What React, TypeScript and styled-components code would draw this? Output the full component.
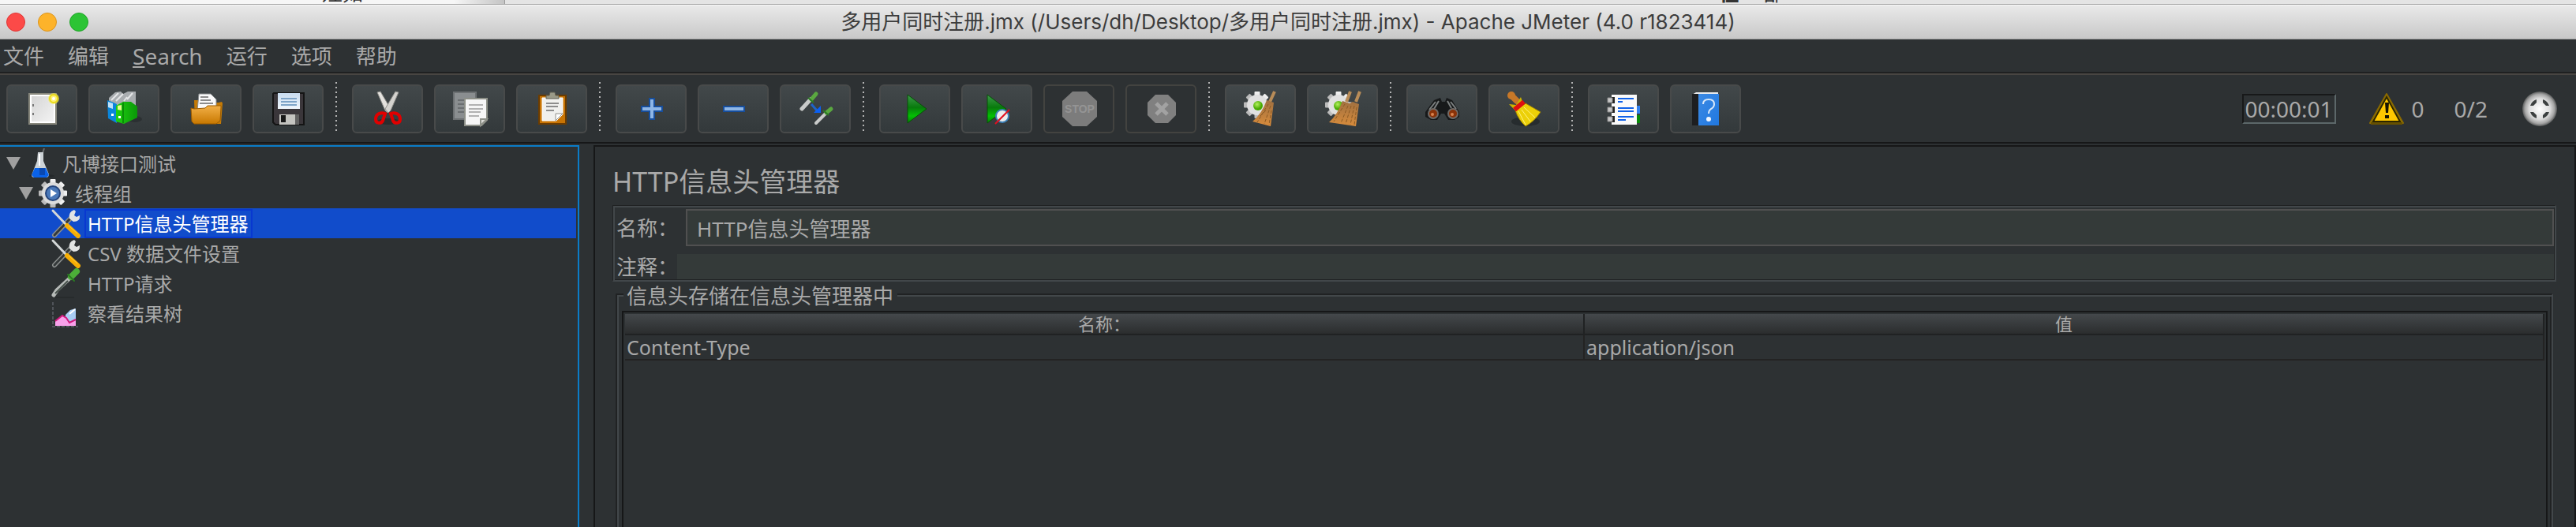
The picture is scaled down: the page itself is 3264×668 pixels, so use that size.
import React from "react";
import styled, { createGlobalStyle } from "styled-components";

const color = {
  panel: "#2d3133",
  text: "#a9a9a9",
  dark: "#161718",
  line: "#202223",
  bevel: "#42474a",
  field: "#343a39",
  fieldEdge: "#505050",
  focus: "#0a7cc8",
  select: "#114ccb",
  selectEdge: "#0838d0",
};

const GlobalStyle = createGlobalStyle`
  * { box-sizing: border-box; }
  body {
    margin: 0;
    background: ${color.panel};
    color: ${color.text};
    font-family: "Noto Sans", "Noto Sans CJK SC", sans-serif;
    font-size: 26px;
    font-weight: 400;
  }
  button, input { font: inherit; color: inherit; }
`;

const Window = styled.div`
  min-height: 100vh;
  display: flex;
  flex-direction: column;
`;

/* ---------- window behind, title bar ---------- */

const BackStrip = styled.div`
  height: 6px;
  display: flex;
  overflow: hidden;
  align-items: flex-end;
  background: #e4e4e4;
  border-bottom: 1px solid #a8a8a8;
  color: #333;
  line-height: 28px;
`;

const BackPane = styled.div`
  width: 640px;
  padding-left: 408px;
  flex: none;
  border-right: 1px solid #999;
  background: linear-gradient(90deg, #f6f6f6 90%, #c4c4c4);
`;

const BackTail = styled.div`
  flex: 1;
  display: flex;
  justify-content: flex-end;
  padding-right: 1004px;
  gap: 30px;
`;

const TitleBar = styled.header`
  height: 44px;
  padding: 0 8px;
  display: grid;
  grid-template-columns: 1fr auto 1fr;
  align-items: center;
  background: linear-gradient(#e9e9e9, #c8c8c8);
  border-top: 1px solid #f6f6f6;
  border-bottom: 1px solid #9d9d9d;
`;

const Lights = styled.div`
  display: flex;
  gap: 16px;
`;

const Light = styled.button<{ $fill: string; $edge: string }>`
  width: 24px;
  height: 24px;
  padding: 0;
  border-radius: 50%;
  border: 1px solid ${(p) => p.$edge};
  background: ${(p) => p.$fill};
`;

const Title = styled.h1`
  margin: 0;
  font: 400 26px/42px Inter, "Noto Sans CJK SC", sans-serif;
  color: #3c3c3c;
  white-space: nowrap;
`;

/* ---------- menu and tool bar ---------- */

const MenuBar = styled.nav`
  height: 45px;
  display: flex;
  gap: 30px;
  padding-left: 4px;
  border-bottom: 2px solid #484542;
  box-shadow: inset 0 -2px 0 #1f2021;
`;

const MenuItem = styled.button<{ $latin?: boolean }>`
  border: 0;
  padding: 0;
  background: none;
  font-size: ${(p) => (p.$latin ? 28 : 26)}px;
  line-height: 42px;
  height: 42px;
`;

const ToolBar = styled.div`
  height: 87px;
  padding: 0 24px 0 8px;
  display: flex;
  align-items: center;
  gap: 14px;
  border-bottom: 2px solid ${color.dark};
`;

const ToolButton = styled.button`
  width: 90px;
  height: 62px;
  flex: none;
  padding: 0;
  display: flex;
  align-items: center;
  justify-content: center;
  border: 2px solid #484a4a;
  border-radius: 6px;
  background: linear-gradient(#42484a, #33393b);
  &:disabled {
    background: none;
    border-color: #434340;
  }
`;

const ToolGap = styled.div`
  width: 8px;
  height: 62px;
  flex: none;
  margin-bottom: 6px;
  padding-left: 1px;
  &::before {
    content: "";
    display: block;
    width: 2px;
    height: 100%;
    background: repeating-linear-gradient(#b4b4b4 0 2px, transparent 2px 6px);
  }
`;

const Status = styled.div`
  margin-left: auto;
  display: flex;
  align-items: center;
  font-size: 28px;
  line-height: 34px;
`;

const Clock = styled.output`
  width: 119px;
  height: 38px;
  padding-left: 2px;
  border: 2px solid;
  border-color: #171819 #5c6769 #5c6769 #171819;
  white-space: nowrap;
  margin-right: 42px;
`;

const WarnButton = styled.button`
  display: flex;
  align-items: center;
  gap: 10px;
  padding: 0;
  border: 0;
  background: none;
  margin-right: 38px;
`;

const Threads = styled.span`
  margin-right: 44px;
`;

/* ---------- panes ---------- */

const Panes = styled.main`
  flex: 1;
  display: flex;
  gap: 18px;
  padding-top: 2px;
`;

const Tree = styled.ul`
  width: 734px;
  flex: none;
  margin: 0;
  padding: 2px 2px 0 0;
  list-style: none;
  border: solid ${color.focus};
  border-width: 2px 2px 0 0;
  font-size: 24px;
`;

const TreeRow = styled.li<{ $depth: number; $on?: boolean }>`
  height: 38px;
  display: flex;
  align-items: center;
  padding-left: ${(p) => 8 + p.$depth * 16}px;
  background: ${(p) => (p.$on ? color.select : "none")};
  color: ${(p) => (p.$on ? "#fff" : "inherit")};
`;

const Twist = styled.span<{ $open?: boolean }>`
  width: 18px;
  height: 16px;
  margin-right: 6px;
  background: ${(p) => (p.$open ? "#a0a0a0" : "none")};
  clip-path: polygon(0 0, 100% 0, 50% 100%);
`;

const TreeLabel = styled.span<{ $on?: boolean }>`
  margin-left: 5px;
  padding: 0 4px 0 2px;
  border: 2px solid ${(p) => (p.$on ? color.selectEdge : "transparent")};
  line-height: 33px;
`;

const Editor = styled.section`
  flex: 1;
  min-width: 0;
  display: flex;
  flex-direction: column;
  padding: 20px 23px 0 22px;
  border: solid ${color.dark};
  border-width: 2px 2px 0;
`;

const Heading = styled.h2`
  margin: 0 0 6px;
  font-size: 34px;
  font-weight: 400;
  line-height: 48px;
`;

const Fields = styled.div`
  display: flex;
  flex-direction: column;
  gap: 10px;
  padding: 4px 1px 1px 2px;
  border: solid;
  border-width: 1px 2px 2px 1px;
  border-color: ${color.line} ${color.bevel} ${color.bevel} ${color.line};
  box-shadow: inset 2px 2px 0 ${color.bevel}, inset -1px -1px 0 ${color.line};
`;

const FieldRow = styled.div`
  display: flex;
  align-items: center;
`;

const FieldLabel = styled.label<{ $width: number }>`
  width: ${(p) => p.$width}px;
  padding-left: 2px;
  flex: none;
  line-height: 32px;
  white-space: nowrap;
`;

const TextField = styled.input<{ $framed?: boolean }>`
  flex: 1;
  min-width: 0;
  height: ${(p) => (p.$framed ? 47 : 32)}px;
  padding: 0 12px;
  border: ${(p) => (p.$framed ? `2px solid ${color.fieldEdge}` : "0")};
  background: ${color.field};
  outline: 0;
`;

const Group = styled.fieldset`
  flex: 1;
  min-width: 0;
  margin: 0 4px;
  padding: 5px 5px 0 6px;
  border: 2px solid;
  border-color: ${color.line} ${color.bevel} ${color.line} ${color.line};
  border-bottom: 0;
  box-shadow: inset 2px 2px 0 ${color.bevel}, inset -2px 0 0 ${color.line};
  display: flex;
  flex-direction: column;
`;

const Legend = styled.legend`
  margin-left: 2px;
  padding: 4px 5px 0 4px;
  line-height: 28px;
  background: ${color.panel};
`;

const TableBox = styled.div`
  flex: 1;
  padding: 2px 2px 0;
  border: solid ${color.dark};
  border-width: 2px 2px 0;
`;

const Table = styled.table`
  width: 100%;
  table-layout: fixed;
  border-collapse: separate;
  border-spacing: 0;
`;

const HeadCell = styled.th`
  height: 27px;
  padding: 0;
  font-size: 22px;
  font-weight: 400;
  line-height: 25px;
  background: linear-gradient(#44484b, #2b2d2e);
  border-right: 2px solid ${color.line};
  border-bottom: 2px solid ${color.line};
`;

const Cell = styled.td`
  height: 32px;
  padding: 0 0 0 2px;
  font-size: 25px;
  line-height: 30px;
  border-right: 2px solid #232323;
  border-bottom: 2px solid #232323;
`;

/* ---------- icons ---------- */

const Icon = ({ size = 48, children }: { size?: number; children: React.ReactNode }) => (
  <svg width={size} height={size} viewBox={`0 0 ${size} ${size}`} aria-hidden="true">
    {children}
  </svg>
);

const Gradients = () => (
  <svg width="0" height="0" style={{ position: "absolute" }} aria-hidden="true">
    <defs>
      <linearGradient id="paper" x1="0" y1="0" x2="1" y2="1">
        <stop offset="0" stopColor="#d2d2d2" /><stop offset="1" stopColor="#f6f6f6" />
      </linearGradient>
      <linearGradient id="folder" x1="0" y1="0" x2="0" y2="1">
        <stop offset="0" stopColor="#f2b048" /><stop offset="1" stopColor="#c87800" />
      </linearGradient>
      <linearGradient id="play" x1="0" y1="0" x2="0" y2="1">
        <stop offset="0" stopColor="#3f9a4c" /><stop offset=".45" stopColor="#087a0c" /><stop offset=".75" stopColor="#04c004" /><stop offset="1" stopColor="#067a06" />
      </linearGradient>
      <linearGradient id="straw" x1="0" y1="0" x2="0" y2="1">
        <stop offset="0" stopColor="#a07040" /><stop offset="1" stopColor="#d88c3c" />
      </linearGradient>
      <linearGradient id="label" x1="0" y1="0" x2="0" y2="1">
        <stop offset="0" stopColor="#c8dcf0" /><stop offset="1" stopColor="#f0f6fc" />
      </linearGradient>
      <linearGradient id="green" x1="0" y1="0" x2="1" y2="0">
        <stop offset="0" stopColor="#1ed010" /><stop offset="1" stopColor="#0a9808" />
      </linearGradient>
      <linearGradient id="steel" x1="0" y1="0" x2="0" y2="1">
        <stop offset="0" stopColor="#f2f2f2" /><stop offset="1" stopColor="#b8b8b8" />
      </linearGradient>
      <linearGradient id="book" x1="0" y1="0" x2="1" y2="1">
        <stop offset="0" stopColor="#3c8ae4" /><stop offset="1" stopColor="#2078e0" />
      </linearGradient>
      <radialGradient id="orb">
        <stop offset="0" stopColor="#fff" /><stop offset=".6" stopColor="#dcdcdc" /><stop offset=".85" stopColor="#a4a4a4" /><stop offset="1" stopColor="#585a5a" />
      </radialGradient>
      <radialGradient id="lamp" cx=".4" cy=".35">
        <stop offset="0" stopColor="#b4f060" /><stop offset="1" stopColor="#46a800" />
      </radialGradient>
    </defs>
  </svg>
);

const NewIcon = () => (
  <Icon>
    <path d="M8 5h34v38H8z" fill="url(#paper)" stroke="#87877c" strokeWidth="2" />
    <path d="M10 7h30v34H10z" fill="none" stroke="#fff" strokeWidth="2" />
    <path d="M12 18h2v3h-2zM12 29h2v3h-2z" fill="#777" />
    <circle cx="39" cy="11" r="7" fill="#f6ee50" opacity=".6" />
    <circle cx="39" cy="11" r="5" fill="#fff07a" stroke="#eadb18" strokeWidth="2" />
    <circle cx="39" cy="11" r="2" fill="#fff" />
  </Icon>
);

const TemplatesIcon = () => (
  <Icon>
    <ellipse cx="38" cy="37" rx="9" ry="4" fill="#202425" opacity=".5" />
    <path d="M5 10 13 3l7-1 3 3 6-3h10v18L20 24 5 18z" fill="#a9adb0" />
    <path d="M8 13 17 4M14 14 23 5M28 12l7-8M24 14l4-5" stroke="#e4e6e7" strokeWidth="2" />
    <path d="M3 13l8 3 4 2v24L4 36z" fill="#0a86dc" />
    <path d="M4 15l6 2v7l-6-2z" fill="#bfe2fa" />
    <path d="M14 20l9-5h10l8 6v14l-17 8-10-3z" fill="url(#green)" />
    <path d="M23 16v26" stroke="#0a8c08" strokeWidth="2" />
    <path d="M16 20l5-1v7l-5-1z" fill="#e8fa90" />
    <path d="M17 33h3v3h-3zM8 30h3v3H8z" fill="#fff" />
  </Icon>
);

const OpenIcon = () => (
  <Icon>
    <path d="M9 13h10l2 3h19l4-1 1 2-2 26H10z" fill="#c47a06" />
    <path d="M15 5h15l7 7v14H13z" fill="#fafafa" stroke="#888c8e" />
    <path d="M17 9h10M17 13h13M16 17h17" stroke="#8c8c8c" strokeWidth="2" />
    <path d="M5 23l4 1 14-1 3-3h17v2l-1 17-5 4H9l-3-3z" fill="url(#folder)" stroke="#9c5c00" />
  </Icon>
);

const SaveIcon = () => (
  <Icon>
    <path d="M6 4h38v40H8l-3-3V5z" fill="#3a363a" stroke="#141414" strokeWidth="2" />
    <path d="M11 4h28v20H11z" fill="url(#label)" />
    <path d="M15 11h20M15 15h20M15 19h20" stroke="#7ea4c8" strokeWidth="2" />
    <path d="M13 31h20v13H13z" fill="#c4c4c0" />
    <path d="M33 31h5v13h-5z" fill="#626262" />
    <path d="M15 32h6v9h-6z" fill="#181818" />
  </Icon>
);

const CutIcon = () => (
  <Icon>
    <ellipse cx="25" cy="40" rx="14" ry="4" fill="#242829" opacity=".7" />
    <path d="M11 3l4-1 13 22-4 5-3-3z" fill="#e4e2de" stroke="#8d8d89" />
    <path d="M38 3l-4-1-13 22 4 5 3-3z" fill="#d4d2ce" stroke="#8d8d89" />
    <path d="M21 30c-5-2-12 0-12 7 0 6 7 6 9 2zM28 30c5-2 12 0 12 7 0 6-7 6-9 2z" fill="none" stroke="#e00000" strokeWidth="4" />
  </Icon>
);

const CopyIcon = () => (
  <Icon>
    <path d="M4 3h28v34H4z" fill="#8a8e90" stroke="#6c7072" strokeWidth="2" />
    <path d="M9 13h10M9 18h8M9 23h8M9 28h8" stroke="#6a6e70" strokeWidth="2" />
    <path d="M18 11h28v27l-7 7H18z" fill="#f6f6f6" stroke="#8d9088" strokeWidth="2" />
    <path d="M23 19h18M23 24h18M23 28h15M23 33h13" stroke="#b2b2b2" strokeWidth="2" />
    <path d="M38 45v-8h8z" fill="#dcdcd8" stroke="#8d9088" strokeWidth="2" />
  </Icon>
);

const PasteIcon = () => (
  <Icon>
    <path d="M8 7h34v36H8z" fill="#c87404" stroke="#6c3c00" strokeWidth="2" />
    <path d="M12 10h26v21l-8 8H12z" fill="#f0f0ee" stroke="#fff" />
    <path d="M17 17h16M17 21h15M17 26h10" stroke="#8c8c8c" strokeWidth="2" />
    <path d="M29 39v-9h9z" fill="#fff" stroke="#8e8e8a" />
    <path d="M17 7h4l1-4h6l1 4h4v4H17z" fill="#9a9a88" stroke="#5f5f52" />
  </Icon>
);

const PlusIcon = () => (
  <Icon>
    <path d="M22 11h6v10h10v6H28v10h-6V27H12v-6h10z" fill="#8eb6e6" stroke="#174e9c" strokeWidth="2" />
  </Icon>
);

const MinusIcon = () => (
  <Icon>
    <path d="M12 21h26v6H12z" fill="#8eb6e6" stroke="#174e9c" strokeWidth="2" />
  </Icon>
);

const ToggleIcon = () => (
  <Icon>
    <path d="M7 24 18 12" stroke="#c9cbca" strokeWidth="5" strokeLinecap="round" />
    <path d="M19 12 25 5" stroke="#5aa840" strokeWidth="5" strokeLinecap="round" />
    <path d="M15 10l7 6" stroke="#2c7a24" strokeWidth="2" />
    <path d="M25 42 37 30" stroke="#c9cbca" strokeWidth="4" strokeLinecap="round" />
    <path d="M38 29 44 24" stroke="#5aa840" strokeWidth="5" strokeLinecap="round" />
    <path d="M34 26l7 6" stroke="#2c7a24" strokeWidth="2" />
    <path d="M19 18l7 8" stroke="#1f64c8" strokeWidth="3" />
    <path d="M31 20v9h-9z" fill="#0a60f4" />
  </Icon>
);

const PlayIcon = () => (
  <Icon>
    <path d="M15 6 39 24 15 42z" fill="url(#play)" stroke="#065006" />
  </Icon>
);

const PlayNoTimerIcon = () => (
  <Icon>
    <path d="M12 6 36 24 12 42z" fill="url(#play)" stroke="#065006" />
    <circle cx="31" cy="33" r="8" fill="#ececec" stroke="#3c80b8" strokeWidth="2" />
    <path d="M22 43 40 25" stroke="#e01020" strokeWidth="2" />
  </Icon>
);

const StopIcon = () => (
  <Icon>
    <path d="M16 2h18l13 12v20L34 46H16L3 34V14z" fill="#7c7c7c" />
    <text x="25" y="29" fontSize="14" fontWeight="700" fontFamily="Liberation Sans, sans-serif" textAnchor="middle" fill="#949494">STOP</text>
  </Icon>
);

const ShutdownIcon = () => (
  <Icon>
    <path d="M17 6h16l10 10v16L33 42H17L7 32V16z" fill="#808080" />
    <path d="M18 17 32 31M32 17 18 31" stroke="#a2a2a2" strokeWidth="5" />
  </Icon>
);

const teeth = (cx: number, cy: number, r: number, w: number) =>
  [0, 45, 90, 135].map((a) => (
    <rect key={a} x={cx - w / 2} y={cy - r} width={w} height={r * 2} rx="1" transform={`rotate(${a} ${cx} ${cy})`} fill="url(#steel)" />
  ));

const ClearIcon = () => (
  <Icon>
    {teeth(20, 19, 17, 7)}
    <circle cx="20" cy="19" r="13" fill="#e0e0e0" />
    <circle cx="21" cy="20" r="6" fill="url(#lamp)" />
    <path d="M42 2 36 15" stroke="#b88c58" strokeWidth="4" />
    <path d="M32 13l9 3-4 30-23-6q12-10 18-27z" fill="url(#straw)" />
    <path d="M34 18l-14 23M37 20l-8 23M31 26l-8 8M38 26l-3 18" stroke="#8a5a24" strokeWidth="1" strokeDasharray="4 2" />
  </Icon>
);

const ClearAllIcon = () => (
  <Icon>
    {teeth(19, 19, 17, 7)}
    <circle cx="19" cy="19" r="13" fill="#e0e0e0" />
    <circle cx="19" cy="20" r="6" fill="url(#lamp)" />
    <path d="M34 2 29 15M46 2 41 15" stroke="#b88c58" strokeWidth="4" />
    <path d="M24 14l9 3 4-2 8 3-4 28-34-5q11-10 17-27z" fill="url(#straw)" />
    <path d="M27 18 13 40M31 20l-9 22M35 20l-7 23M39 20l-5 24M42 22l-3 22" stroke="#8a5a24" strokeWidth="1" strokeDasharray="4 2" />
  </Icon>
);

const BinocularsIcon = () => (
  <Icon>
    <path d="M14 13l8-3 2 5h4l2-5 7 3 9 15v6l-6 4h-8l-5-8h-4l-5 8h-8l-7-4v-6z" fill="#17191a" />
    <path d="M16 15 8 25M20 14l-6 10M35 15l7 9M31 14l5 9" stroke="#7c8080" strokeWidth="2" />
    <circle cx="13" cy="30" r="6" fill="#8a3208" stroke="#6f6b68" strokeWidth="2" />
    <circle cx="38" cy="30" r="6" fill="#8a3208" stroke="#6f6b68" strokeWidth="2" />
    <circle cx="12" cy="31" r="2" fill="#d88450" />
    <circle cx="37" cy="31" r="2" fill="#d88450" />
  </Icon>
);

const BroomIcon = () => (
  <Icon>
    <ellipse cx="26" cy="40" rx="18" ry="6" fill="#23282a" opacity=".8" />
    <circle cx="8" cy="7" r="5" fill="#c87828" />
    <path d="M9 8l6 6" stroke="#c87828" strokeWidth="8" strokeLinecap="round" />
    <path d="M5 18l9 1 6-10 2 6 3 4-11 8z" fill="#ccb400" />
    <path d="M13 26l13-9 19 11q-8 12-19 18-9-8-13-20z" fill="#ecd008" stroke="#a08400" />
    <path d="M17 27l9 17M21 25l11 15M24 22l14 13" stroke="#fff27c" />
    <path d="M12 25 24 15" stroke="#de1010" strokeWidth="6" />
  </Icon>
);

const FunctionIcon = () => (
  <Icon>
    <path d="M41 20h4v10h-4z" fill="#3080f0" />
    <path d="M41 32h4v10h-4z" fill="#088a08" />
    <path d="M9 6h32v38H9z" fill="#fafafa" />
    <path d="M17 11h20M17 23h20M17 27h20M17 34h20" stroke="#1062e8" strokeWidth="2" />
    <path d="M17 15h6M17 38h10" stroke="#1062e8" strokeWidth="2" />
    <path d="M9 9h4v8H9zM9 21h4v8H9zM9 33h4v8H9z" fill="#222" />
    <path d="M4 10h6v6H4zM4 22h6v6H4zM4 34h6v6H4z" fill="#c8c8c8" stroke="#8a8a8a" />
  </Icon>
);

const HelpIcon = () => (
  <Icon>
    <path d="M7 6l5-3h28v3z" fill="#e8eaec" />
    <path d="M7 5h8v40H7z" fill="#1d1e20" />
    <path d="M15 5h26v40H15z" fill="url(#book)" />
    <path d="M21 18q0-6 7-6t7 6q0 4-4 6-3 2-3 6" fill="none" stroke="#d8e8fa" strokeWidth="2" />
    <circle cx="28" cy="37" r="3" fill="#f0f6fe" />
  </Icon>
);

const WarnIcon = () => (
  <svg width="44" height="40" viewBox="0 0 44 40" aria-hidden="true">
    <path d="M22 1 43 38H1z" fill="#a88200" stroke="#8a6a00" strokeWidth="2" strokeLinejoin="round" />
    <path d="M22 5 39 36H5z" fill="#ffc800" stroke="#2c2600" strokeWidth="2" />
    <path d="M2 37h40v3H2z" fill="#665000" />
    <path d="M20 12h5l-1 13h-3z" fill="#181400" />
    <path d="M20 28h5v4h-5z" fill="#181400" />
  </svg>
);

const OrbIcon = () => (
  <svg width="44" height="44" viewBox="0 0 44 44" aria-hidden="true">
    <circle cx="22" cy="22" r="22" fill="url(#orb)" />
    <path d="M10 18q2-6 8-8v4l-4 4zM26 10q6 2 8 8h-4l-4-4zM10 26h4l4 4v4q-6-2-8-8zM26 34v-4l4-4h4q-2 6-8 8z" fill="#3c4040" />
  </svg>
);

const FlaskIcon = () => (
  <Icon size={38}>
    <ellipse cx="21" cy="35" rx="16" ry="2" fill="#24282a" />
    <path d="M22 6l2-6" stroke="#6a6e70" strokeWidth="2" />
    <path d="M16 5h7v11l7 17q0 4-4 4H12q-4 0-4-3l7-18z" fill="#ccd2d6" />
    <path d="M12 25h14l4 9-3 3H11l-3-3z" fill="#0a62e8" />
    <path d="M18 25h7v9h-7z" fill="#0a48b0" />
    <path d="M18 7v15" stroke="#fff" strokeWidth="2" />
  </Icon>
);

const GearIcon = () => (
  <Icon size={38}>
    {teeth(19, 19, 18, 7)}
    <circle cx="19" cy="19" r="14" fill="#dcdcdc" />
    <circle cx="19" cy="19" r="9" fill="#4a78b8" stroke="#24447c" strokeWidth="2" />
    <path d="M16 14l8 5-8 5z" fill="#fff" />
  </Icon>
);

const ToolsIcon = () => (
  <Icon size={38}>
    <path d="M5 34 27 11" stroke="#8d9190" strokeWidth="6" strokeLinecap="round" />
    <path d="M5 34 24 14" stroke="#34393a" strokeWidth="3" strokeLinecap="round" />
    <path d="M24 13q-2-8 6-11l2 2-2 5 3 2 4-2q1 8-8 8z" fill="#e2e4e4" />
    <path d="M3 3 21 22" stroke="#d4d8d8" strokeWidth="3" strokeLinecap="round" />
    <path d="M21 22 35 35" stroke="#f6ae04" strokeWidth="6" strokeLinecap="round" />
    <path d="M23 22 34 32" stroke="#ffd040" strokeWidth="1" />
  </Icon>
);

const PipetteIcon = () => (
  <Icon size={38}>
    <path d="M4 34 8 28 23 14" fill="none" stroke="#b6bab8" strokeWidth="5" strokeLinecap="round" />
    <path d="M6 32 22 16" stroke="#45504a" strokeWidth="2" />
    <path d="M26 11 33 4" stroke="#4cae38" strokeWidth="8" strokeLinecap="round" />
    <path d="M22 8l8 8" stroke="#2a7a22" strokeWidth="2" strokeLinecap="round" />
    <path d="M6 37h24" stroke="#222627" />
  </Icon>
);

const ChartIcon = () => (
  <Icon size={38}>
    <path d="M3 5v31h32" fill="none" stroke="#50545a" strokeWidth="2" strokeDasharray="4 2" />
    <path d="M19 21l6-6 7-2v22H19z" fill="#a8ccf4" />
    <path d="M24 20l7-6" stroke="#fff" strokeWidth="2" />
    <path d="M6 35v-6l9-7 4 2 5 7 8-3v7z" fill="#f8a0ea" />
    <path d="M6 29l9-7 5 3 4 6 8-4" fill="none" stroke="#d0187c" strokeWidth="2" />
  </Icon>
);

/* ---------- content ---------- */

type Tool = { name: string; icon: () => React.ReactElement; off?: boolean };

const toolGroups: Tool[][] = [
  [
    { name: "新建", icon: NewIcon },
    { name: "模板", icon: TemplatesIcon },
    { name: "打开", icon: OpenIcon },
    { name: "保存", icon: SaveIcon },
  ],
  [
    { name: "剪切", icon: CutIcon },
    { name: "复制", icon: CopyIcon },
    { name: "粘贴", icon: PasteIcon },
  ],
  [
    { name: "展开", icon: PlusIcon },
    { name: "折叠", icon: MinusIcon },
    { name: "切换", icon: ToggleIcon },
  ],
  [
    { name: "启动", icon: PlayIcon },
    { name: "不停顿启动", icon: PlayNoTimerIcon },
    { name: "停止", icon: StopIcon, off: true },
    { name: "关闭", icon: ShutdownIcon, off: true },
  ],
  [
    { name: "清除", icon: ClearIcon },
    { name: "清除全部", icon: ClearAllIcon },
  ],
  [
    { name: "查找", icon: BinocularsIcon },
    { name: "重置查找", icon: BroomIcon },
  ],
  [
    { name: "函数助手", icon: FunctionIcon },
    { name: "帮助", icon: HelpIcon },
  ],
];

const nodes = [
  { text: "凡博接口测试", depth: 0, icon: FlaskIcon, open: true },
  { text: "线程组", depth: 1, icon: GearIcon, open: true },
  { text: "HTTP信息头管理器", depth: 2, icon: ToolsIcon, on: true },
  { text: "CSV 数据文件设置", depth: 2, icon: ToolsIcon },
  { text: "HTTP请求", depth: 2, icon: PipetteIcon },
  { text: "察看结果树", depth: 2, icon: ChartIcon },
];

export default function App() {
  return (
    <Window>
      <GlobalStyle />
      <Gradients />
      <BackStrip aria-hidden="true">
        <BackPane>娃如</BackPane>
        <BackTail>
          <b>在</b>
          <span>部</span>
        </BackTail>
      </BackStrip>
      <TitleBar>
        <Lights>
          <Light aria-label="关闭窗口" $fill="#fc4a48" $edge="#e03634" />
          <Light aria-label="最小化" $fill="#fdb32a" $edge="#dc941c" />
          <Light aria-label="缩放" $fill="#2cc435" $edge="#1ea427" />
        </Lights>
        <Title>多用户同时注册.jmx (/Users/dh/Desktop/多用户同时注册.jmx) - Apache JMeter (4.0 r1823414)</Title>
      </TitleBar>

      <MenuBar>
        <MenuItem>文件</MenuItem>
        <MenuItem>编辑</MenuItem>
        <MenuItem $latin><u>S</u>earch</MenuItem>
        <MenuItem>运行</MenuItem>
        <MenuItem>选项</MenuItem>
        <MenuItem>帮助</MenuItem>
      </MenuBar>

      <ToolBar role="toolbar">
        {toolGroups.map((group, i) => (
          <React.Fragment key={i}>
            {i > 0 && <ToolGap />}
            {group.map(({ name, icon: Glyph, off }) => (
              <ToolButton key={name} aria-label={name} disabled={off}>
                <Glyph />
              </ToolButton>
            ))}
          </React.Fragment>
        ))}
        <Status>
          <Clock>00:00:01</Clock>
          <WarnButton>
            <WarnIcon />0
          </WarnButton>
          <Threads>0/2</Threads>
          <OrbIcon />
        </Status>
      </ToolBar>

      <Panes>
        <Tree role="tree">
          {nodes.map(({ text, depth, icon: Glyph, open, on }) => (
            <TreeRow key={text} role="treeitem" aria-selected={!!on} $depth={depth} $on={on}>
              <Twist $open={open} />
              <Glyph />
              <TreeLabel $on={on}>{text}</TreeLabel>
            </TreeRow>
          ))}
        </Tree>

        <Editor>
          <Heading>HTTP信息头管理器</Heading>
          <Fields>
            <FieldRow>
              <FieldLabel htmlFor="name" $width={90}>名称：</FieldLabel>
              <TextField id="name" $framed defaultValue="HTTP信息头管理器" />
            </FieldRow>
            <FieldRow>
              <FieldLabel htmlFor="comment" $width={79}>注释：</FieldLabel>
              <TextField id="comment" />
            </FieldRow>
          </Fields>
          <Group>
            <Legend>信息头存储在信息头管理器中</Legend>
            <TableBox>
              <Table>
                <thead>
                  <tr>
                    <HeadCell>名称：</HeadCell>
                    <HeadCell>值</HeadCell>
                  </tr>
                </thead>
                <tbody>
                  <tr>
                    <Cell>Content-Type</Cell>
                    <Cell>application/json</Cell>
                  </tr>
                </tbody>
              </Table>
            </TableBox>
          </Group>
        </Editor>
      </Panes>
    </Window>
  );
}
